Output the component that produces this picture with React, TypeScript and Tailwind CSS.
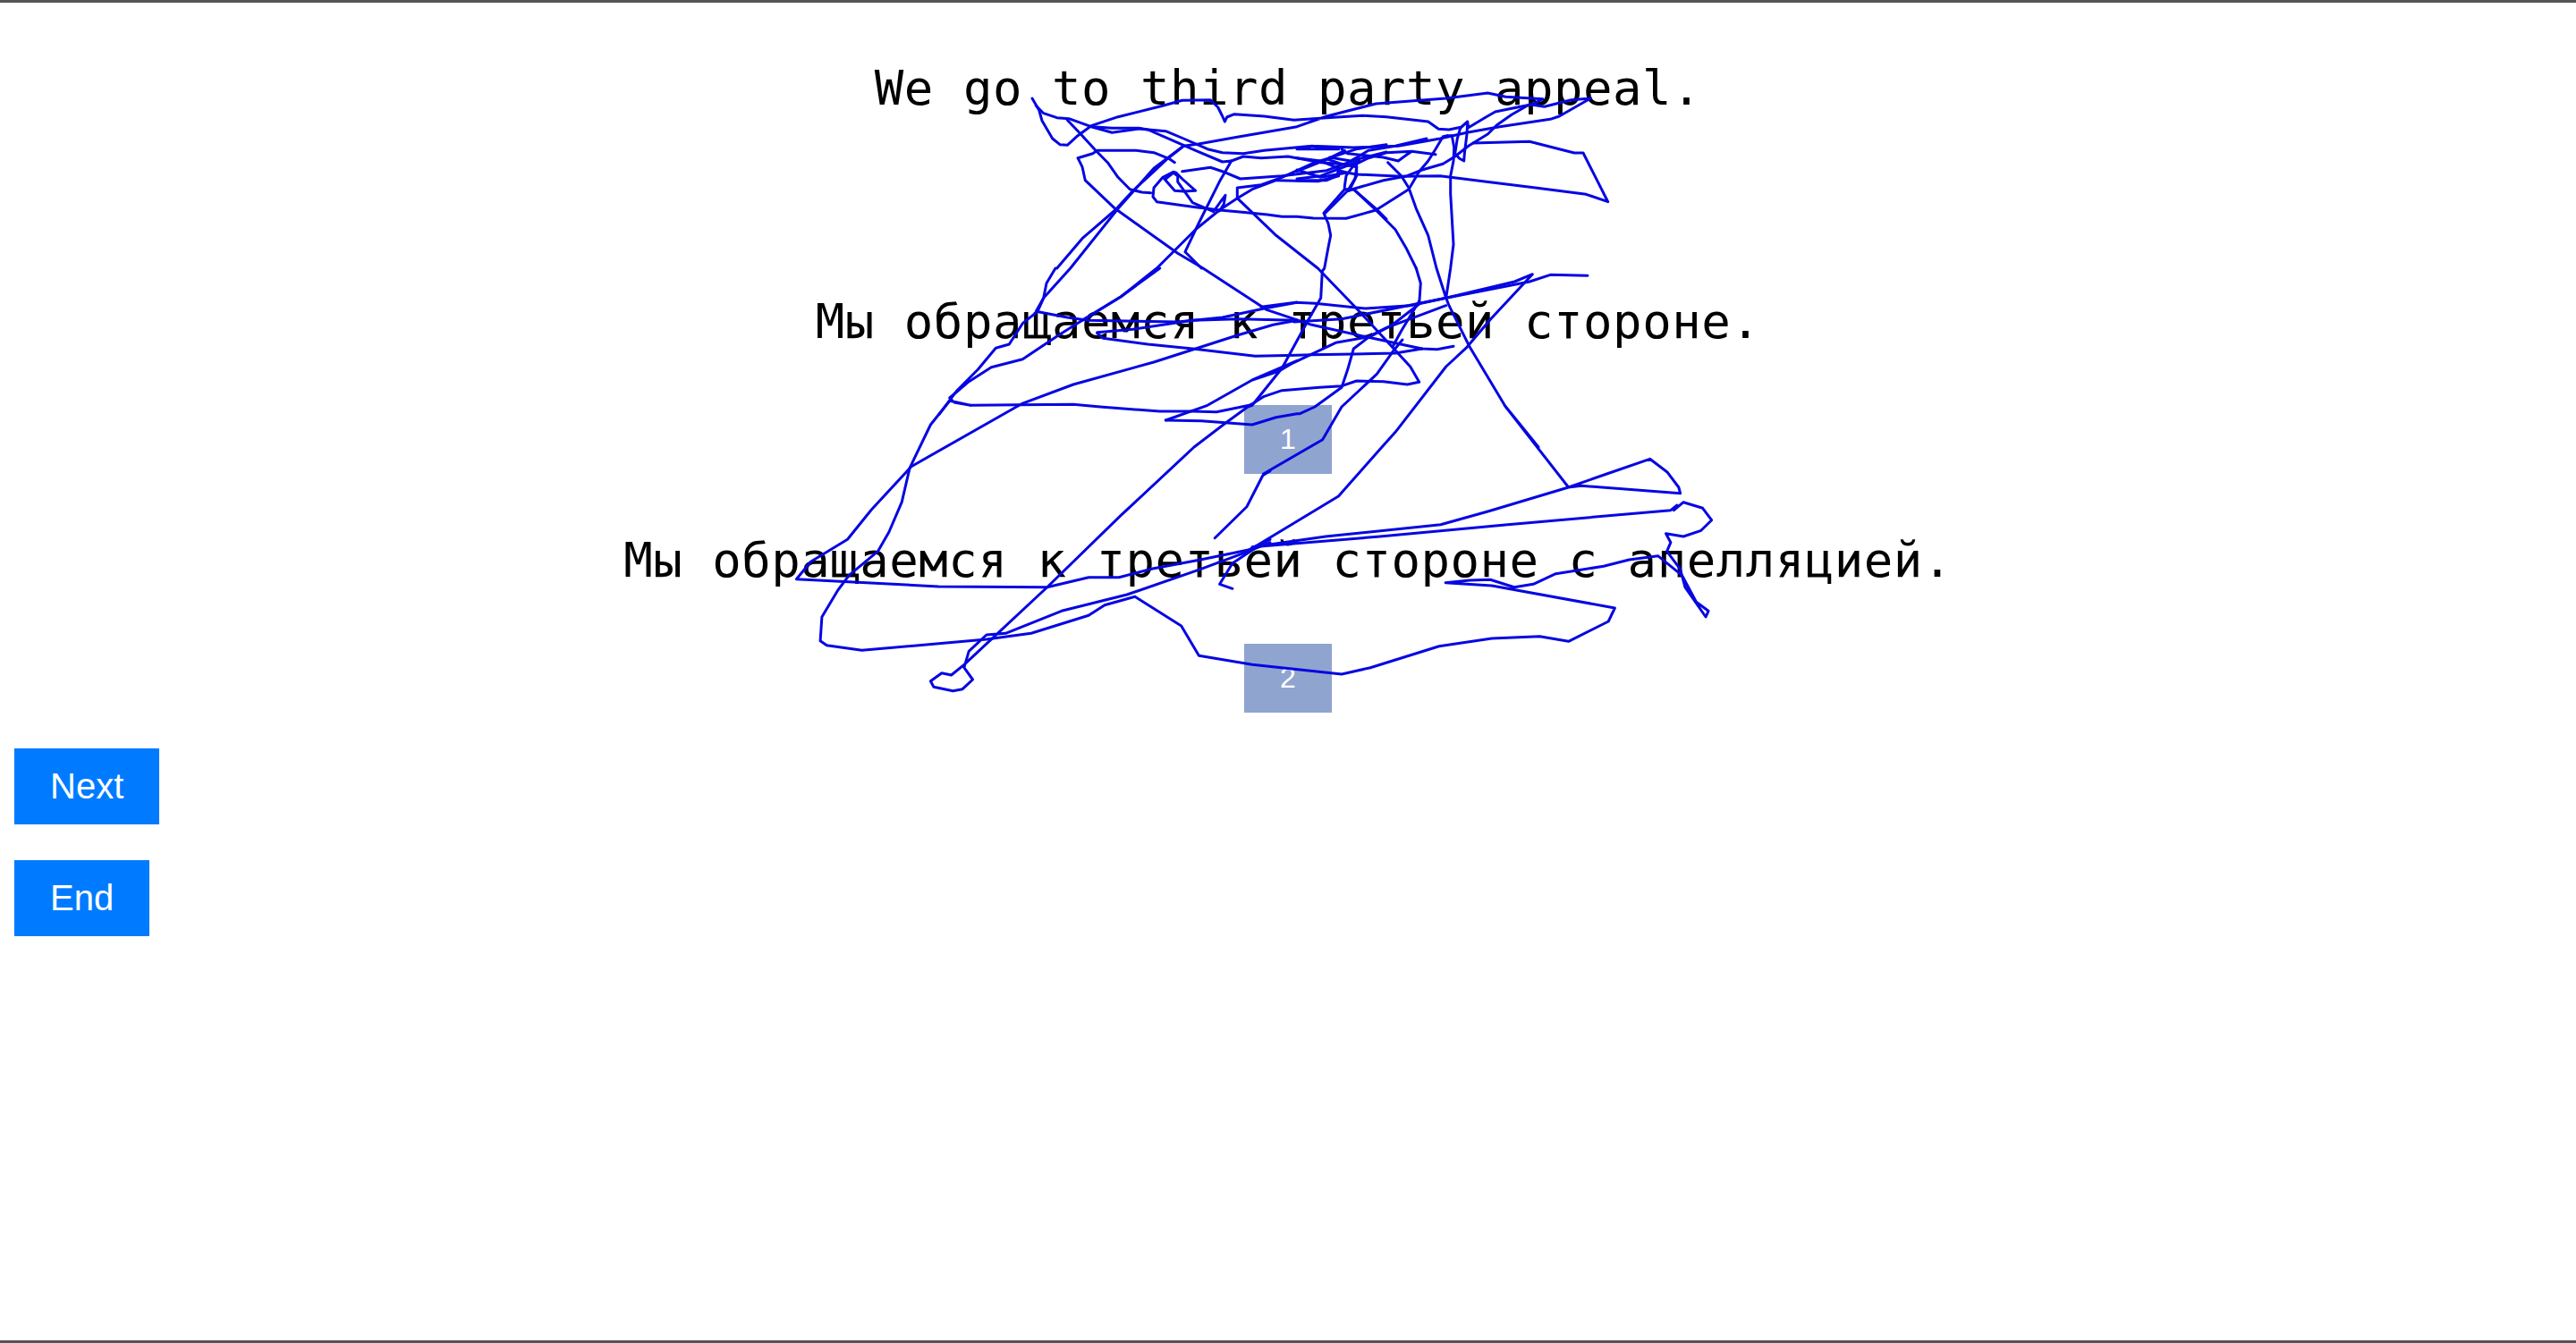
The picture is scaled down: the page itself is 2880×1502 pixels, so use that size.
import React from "react";

// scribble traced from the reference, in crop coordinates
const at = (ox: number, oy: number, sx = 3, sy = 3) => (s: string) =>
  s
    .trim()
    .split(/\s+/)
    .map((p) => {
      const [x, y] = p.split(",").map(Number);
      return `${(ox + x / sx).toFixed(1)},${(oy + y / sy).toFixed(1)}`;
    })
    .join(" ");

const a = at(1150, 100);
const b = at(1450, 100);
const c = at(1050, 300);
const d = at(1400, 300);
const e = at(860, 380, 2.8, 3);
const f = at(1400, 380, 2.8, 3);

const strokes: string[] = [
  a("12,30 35,70 45,105 80,165 105,185 130,187 165,155 210,122 300,92 450,55 515,37 610,35 635,60 650,90 658,108 665,93 690,83 790,90 890,103") +
    " " +
    b("100,95 220,88 300,92 440,108 475,133 510,135 550,127 572,108 548,130 538,165 530,215 545,232 560,240 562,215 570,150 572,108 575,128 630,95 665,75 750,58 790,50 825,32 700,25 640,12 500,30 410,37 265,48 100,90 0,125") +
    " " +
    a("700,160 570,183 520,190 465,233 415,280 350,340 290,405 180,500 95,600") +
    " " +
    c("390,0 360,50 350,100 330,145 280,185 235,255 190,268 130,340 60,410 0,490"),
  a("520,190 420,265 300,400 140,600") + " " + c("350,100 325,145 430,165 500,175 800,180 950,165 1090,135 1200,115") + " " + d("30,130 145,115 210,118 380,135 530,125 650,100 930,45 1000,22 1125,25"),
  b("985,30 920,35 830,58 780,50 720,85 670,120 640,150 575,190 530,225 490,250 420,270 370,290 290,305 185,335 160,335 90,415 105,450 113,490 105,530 92,600") +
    " " +
    d("235,10 230,100 190,170 100,335 0,460") +
    " " +
    c("1035,465 960,520 855,600") +
    " " +
    e("1100,590 870,830 610,1090 570,1125 540,1118 505,1145 515,1165 575,1178 605,1172 637,1140 610,1100 625,1045 680,990 740,985 915,910 1120,855 1350,770 1500,710 1568,680"),
  b("985,30 880,90 850,100 680,125 570,145 480,165 340,190 190,195 50,190 0,200") +
    " " +
    a("1040,200 950,190 790,205 720,215 650,212 600,200 520,165 460,140 370,132 280,145 210,125 135,98 95,95 50,80 25,55"),
  b("590,180 780,175 930,213 960,213 1043,377 970,352 800,330 660,313 480,290 350,292 200,285 170,280 140,272"),
  b("505,155 490,158 465,200 440,240 410,275 375,335 265,405 165,433 55,432 0,427") +
    " " +
    a("850,427 800,420 700,410 640,405 600,400 560,395 430,377 417,360 420,330 450,295 485,277 495,280 515,300 560,340 520,342 490,340 455,300"),
  b("505,155 520,155 527,195 525,240 515,290 515,350 525,520 515,600") +
    " " +
    d("650,100 660,125 730,265 850,465 960,600") +
    " " +
    f("790,220 990,495 1110,450 1245,400 1300,445 1335,495 1340,515 1030,490 990,495 740,575 590,620 230,660 0,695") +
    " " +
    f("400,660 800,620 1310,572 1330,555 1320,572 1350,545 1410,565 1438,605 1405,640 1350,660 1295,650 1310,680 1298,710 1340,770 1355,830 1420,930 1428,910 1390,880 1345,790 1270,725 1180,738 1100,760 950,785 880,820 820,830 745,805 680,807 605,815 750,825 1135,900 1115,945 990,1012 900,995 750,1002 585,1028 370,1100 280,1122 0,1090") +
    " " +
    e("1345,1060 1290,960 1145,862 1050,890 1000,925 820,985 680,1005 290,1042 180,1025 160,1010 165,930 215,840 250,790 340,710 375,645 415,545 440,430 505,285 565,205") +
    " " +
    c("105,460 50,450 35,435 100,380 175,332 280,305 400,225 480,175 610,95 740,0"),
  a("130,103 175,150 225,205 265,245 300,295 340,335 380,345 410,347"),
  a("490,245 470,232 420,212 360,205 230,205 215,215 165,230 180,260 190,305 290,400 500,550 585,600") +
    " " +
    d("50,140 200,190 390,232 530,262 570,270 620,272 675,262"),
  a("215,125 280,130 370,130 400,135 480,170 560,205 650,243 680,240 640,310 570,450 525,545 580,600"),
  a("680,240 720,225 780,230 870,225 980,245 1040,250 1040,290 970,308 830,305 750,335 700,365 640,405 560,470 430,600") +
    " " +
    c("610,95 480,175"),
  a("460,300 485,280 500,290 500,310 550,380 620,410 645,375 660,355 655,385 640,408"),
  a("515,275 610,262 650,275 710,300 850,290 1000,272 1100,235 1200,210"),
  a("700,365 700,330 780,320 850,295 960,245 1010,230 1100,200 1200,185"),
  a("700,365 830,490 970,600") + " " + d("220,0 350,135 470,265 530,330 560,382 520,390 440,380 350,378 300,395 225,400 100,410 40,430 0,455") + " " + c("1040,460 930,482 850,480 740,480 540,465 450,457 265,458 105,460"),
  c("530,215 650,205 850,175 1000,170 1200,175") + " " + d("140,180 300,170 650,100 880,45 940,20 800,170 720,265 650,330 480,550 435,600") + " " + f("270,525 0,700") + " " + e("1520,700 1450,750 1410,820 1450,835"),
  c("530,218 550,235 700,255 850,270 1060,295 1200,292") + " " + d("200,290 340,288 480,285 570,270"),
  e("870,830 530,828 85,803 130,745 245,670 320,570 445,425 790,215") + " " + c("450,390 720,315 860,270 1000,225 1120,190 1200,175"),
  e("870,830 1000,797 1095,797 1200,768 1350,738 1500,705 1568,670"),
  c("760,510 900,460 1050,375 1140,345 1200,310") + " " + d("0,375 90,340 280,250 390,230 450,200 650,125"),
  c("760,510 880,512 1050,525 1130,500 1200,488") + " " + d("160,488 210,465 300,400 320,340 340,270 390,232 470,190 560,120 565,50 550,0"),
  e("1395,665 1495,560 1545,455 1568,440") + " " + f("35,450 220,335 280,225 390,115 440,40 470,0"),
  d("470,265 500,210 560,110"),
  d("618,0 650,100") + " " + b("468,600 440,490 400,400 375,330 350,290 305,245"),
  d("550,0") + " " + b("365,530 330,470 265,405 190,335"),
  b("160,335 160,325 165,290 190,255 240,230 300,212 385,208 465,218 385,208 360,225 340,240 290,228 170,215 150,200"),
  b("175,340 195,300 200,260 150,250 105,235 110,228 180,240 240,205 330,190 435,165"),
  b("0,230 80,240 140,265 135,290 100,305 0,305"),
  b("0,270 80,295 165,280"),
  b("0,300 80,290 210,240"),
  b("0,275 100,235 160,205"),
  a("995,415 1070,340 1100,290 1100,255 1060,255"),
  a("1070,340 1090,335 1165,400 1200,435"),
];

const Line: React.FC<{ children: React.ReactNode }> = ({ children }) => (
  <p className="text-center text-black font-['DejaVu_Sans_Mono',monospace] text-[54px] leading-[70px] tracking-[0.5px]">
    {children}
  </p>
);

const Choice: React.FC<{ n: number }> = ({ n }) => (
  <div className="flex justify-center">
    <button className="bg-[#90a4d0] text-white text-[32px] px-10 py-5 leading-[37px]">{n}</button>
  </div>
);

const App: React.FC = () => {
  return (
    <div className="relative h-[1502px] box-border overflow-hidden border-y-[3px] border-[#555555] bg-white font-['Liberation_Sans',Arial,sans-serif]">
      <div className="flex h-[260px] flex-col pt-[61px]">
        <Line>We go to third party appeal.</Line>
      </div>
      <div className="flex h-[190px] flex-col pt-[62px]">
        <Line>Мы обращаемся к третьей стороне.</Line>
      </div>
      <Choice n={1} />
      <div className="flex h-[190px] flex-col pt-[62px]">
        <Line>Мы обращаемся к третьей стороне с апелляцией.</Line>
      </div>
      <Choice n={2} />
      <div className="mt-10 flex flex-col items-start gap-10 pl-4">
        <button className="bg-[#007bff] px-10 py-5 text-[40px] leading-[45px] text-white">Next</button>
        <button className="bg-[#007bff] px-10 py-5 text-[40px] leading-[45px] text-white">End</button>
      </div>
      <svg className="pointer-events-none absolute left-0 top-[-3px]" width="2880" height="1502" fill="none">
        {strokes.map((pts, i) => (
          <polyline key={i} points={pts} stroke="#0606e2" strokeWidth="3" strokeLinejoin="round" strokeLinecap="round" />
        ))}
      </svg>
    </div>
  );
};

export default App;
